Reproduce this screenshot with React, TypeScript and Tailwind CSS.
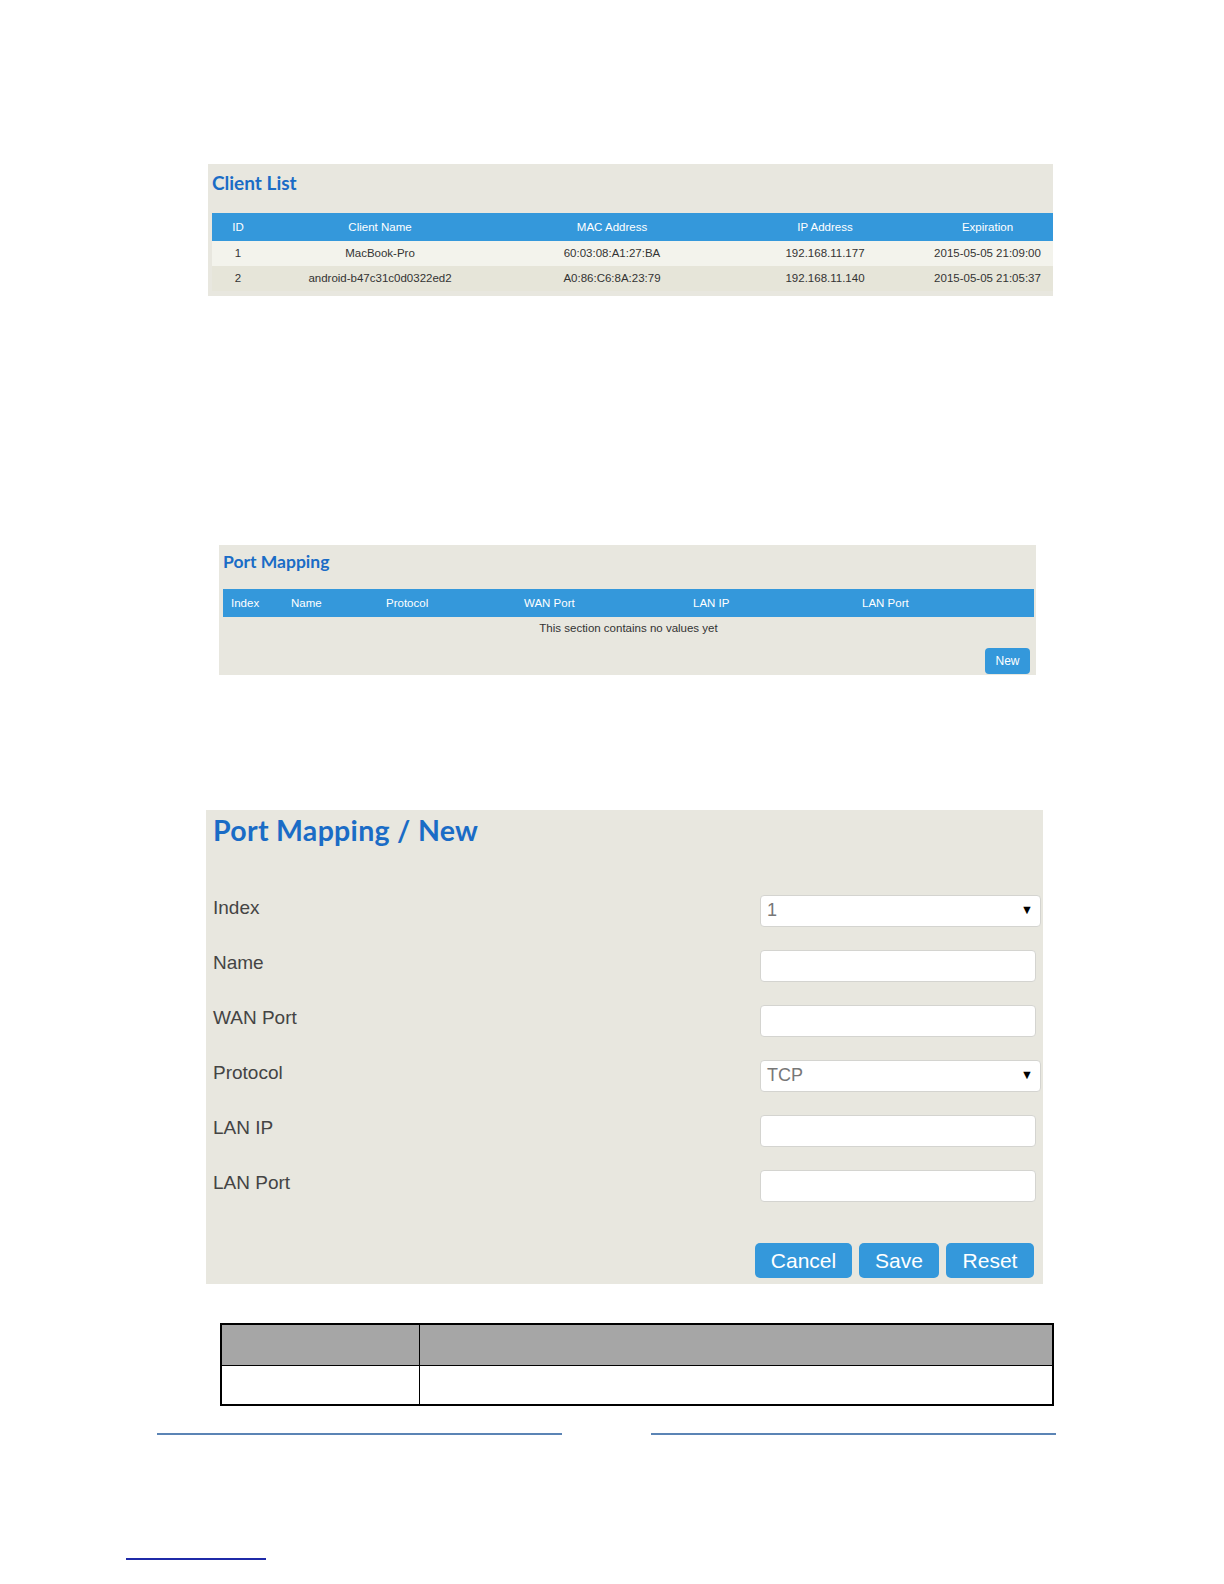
const CLIENTS = [
  { id: "1", name: "MacBook-Pro", mac: "60:03:08:A1:27:BA", ip: "192.168.11.177", exp: "2015-05-05 21:09:00" },
  { id: "2", name: "android-b47c31c0d0322ed2", mac: "A0:86:C6:8A:23:79", ip: "192.168.11.140", exp: "2015-05-05 21:05:37" },
];

const FIELDS = [
  { label: "Index", kind: "select", value: "1" },
  { label: "Name", kind: "input" },
  { label: "WAN Port", kind: "input" },
  { label: "Protocol", kind: "select", value: "TCP" },
  { label: "LAN IP", kind: "input" },
  { label: "LAN Port", kind: "input" },
];

function Arrow() {
  return <span className="text-[12.5px] leading-none text-black">▼</span>;
}

export default function App() {
  return (
    <div className="min-h-[1584px] bg-white pt-[164px] font-['Liberation_Sans',Arial,sans-serif]">
      {/* Client list */}
      <section className="ml-[208px] h-[132px] w-[845px] bg-[#e8e7df] pl-[4px]">
        <h2 className="flex h-[49px] items-start pt-[5px] font-['Lato',sans-serif] text-[19px] font-bold text-[#1a6cc6]">
          Client List
        </h2>
        <div className="grid grid-cols-[52px_232px_232px_194px_131px] text-center text-[11.5px]">
          {["ID", "Client Name", "MAC Address", "IP Address", "Expiration"].map((h) => (
            <div key={h} className="flex h-[28px] items-center justify-center bg-[#3498db] pt-[2px] text-white">
              {h}
            </div>
          ))}
          {CLIENTS.map((c, i) =>
            [c.id, c.name, c.mac, c.ip, c.exp].map((v, j) => (
              <div
                key={`${i}-${j}`}
                className={`flex h-[25px] items-center justify-center text-[#333] ${i === 0 ? "bg-[#f3f3ec]" : "bg-[#e6e5d9]"}`}
              >
                {v}
              </div>
            )),
          )}
        </div>
      </section>

      {/* Port mapping list */}
      <section className="ml-[219px] mt-[249px] h-[130px] w-[817px] bg-[#e8e7df] pl-[4px] pr-[2px]">
        <h2 className="flex h-[44px] items-start pt-[4px] font-['Lato',sans-serif] text-[17.5px] font-bold text-[#1a6cc6]">
          Port Mapping
        </h2>
        <div className="grid h-[28px] grid-cols-[60px_95px_138px_169px_169px_1fr] items-center bg-[#3498db] text-[11.5px] text-white">
          {["Index", "Name", "Protocol", "WAN Port", "LAN IP", "LAN Port"].map((h) => (
            <div key={h} className="pl-[8px] pt-[2px]">
              {h}
            </div>
          ))}
        </div>
        <div className="flex h-[24px] items-center justify-center text-[11.5px] text-[#333]">
          This section contains no values yet
        </div>
        <div className="mt-[7px] flex justify-end pr-[4px]">
          <button className="h-[26px] w-[45px] rounded-[4px] bg-[#3498db] text-[12px] text-white">New</button>
        </div>
      </section>

      {/* Port mapping / new */}
      <section className="ml-[206px] mt-[135px] h-[474px] w-[837px] bg-[#e8e7df] pl-[7px]">
        <h1 className="h-[73px] pt-[4px] font-['Lato',sans-serif] text-[28.5px] font-bold leading-[32px] tracking-[0.3px] text-[#1a6cc6]">
          Port Mapping / New
        </h1>
        {FIELDS.map((f) => (
          <div key={f.label} className="flex h-[55px] items-center">
            <label className="-mt-[4px] w-[547px] text-[19px] text-[#444]">{f.label}</label>
            {f.kind === "select" ? (
              <div className="flex h-[32px] w-[281px] items-center justify-between rounded-[4px] border border-[#d4d4d0] bg-white pl-[6px] pr-[7px] text-[18px] text-[#777]">
                <span>{f.value}</span>
                <Arrow />
              </div>
            ) : (
              <div className="h-[32px] w-[276px] rounded-[4px] border border-[#d4d4d0] bg-white" />
            )}
          </div>
        ))}
        <div className="mt-[30px] flex justify-end gap-[7px] pr-[9px]">
          <button className="h-[35px] w-[97px] rounded-[5px] bg-[#3498db] text-[21px] text-white">Cancel</button>
          <button className="h-[35px] w-[80px] rounded-[5px] bg-[#3498db] text-[21px] text-white">Save</button>
          <button className="h-[35px] w-[88px] rounded-[5px] bg-[#3498db] text-[21px] text-white">Reset</button>
        </div>
      </section>

      {/* Description table */}
      <table className="ml-[220px] mt-[39px] w-[834px] border-collapse border-2 border-black">
        <tbody>
          <tr className="h-[41px] bg-[#a6a6a6]">
            <td className="w-[198px] border border-black" />
            <td className="border border-black" />
          </tr>
          <tr className="h-[40px]">
            <td className="border border-black border-b-2" />
            <td className="border border-black border-b-2" />
          </tr>
        </tbody>
      </table>

      {/* footer rules */}
      <div className="mt-[27px] flex">
        <div className="ml-[157px] h-[2px] w-[405px] bg-[#5b84b5]" />
        <div className="ml-[89px] h-[2px] w-[405px] bg-[#5b84b5]" />
      </div>
      <div className="ml-[126px] mt-[123px] h-[2px] w-[140px] bg-[#1f2aa8]" />
    </div>
  );
}
